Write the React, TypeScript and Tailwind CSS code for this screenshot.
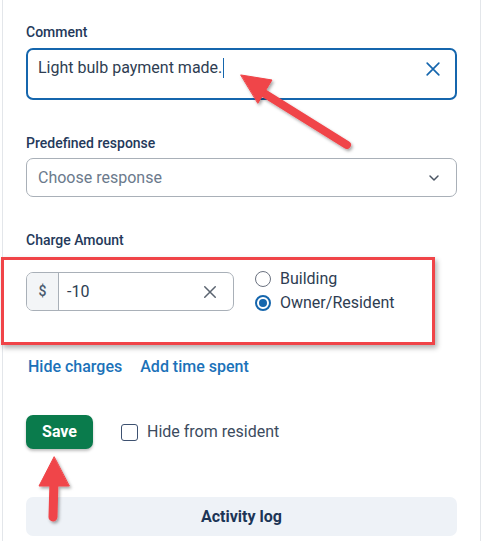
import React from 'react';

const X = ({ className }: { className?: string }) => (
  <svg viewBox="0 0 24 24" className={className} fill="none" stroke="currentColor" strokeWidth={2} strokeLinecap="round">
    <path d="M5 5l14 14M19 5L5 19" />
  </svg>
);

export default function App() {
  return (
    <div className="relative min-h-[541px] bg-white" style={{ fontFamily: 'Roboto, "Liberation Sans", sans-serif' }}>
      <div className="ml-[2px] mr-[2px] min-h-[541px] border-x border-[#e3e6ea] px-[23px] pt-[24px]">
        {/* Comment */}
        <div className="h-[16px] text-[14px] leading-[16px] font-medium text-[#24395a]">Comment</div>
        <div className="mt-[8px] flex h-[52px] items-start rounded-[7px] border-2 border-[#1566ad] pl-[10px] pr-[12px] pt-[7px]">
          <div className="flex flex-1 items-center text-[16px] leading-[22px] text-[#2e3d52]">
            Light bulb payment made.
            <span className="ml-[1px] inline-block h-[20px] w-px bg-[#1566ad]" />
          </div>
          <X className="mt-[2px] h-[20px] w-[20px] text-[#1566ad]" />
        </div>

        {/* Predefined response */}
        <div className="mt-[35px] h-[16px] text-[14px] leading-[16px] font-medium text-[#24395a]">Predefined response</div>
        <div className="mt-[7px] flex h-[39px] items-center rounded-[7px] border border-[#a9b0b8] pl-[11px] pr-[14px]">
          <span className="flex-1 text-[16px] text-[#6b7a8c]">Choose response</span>
          <svg viewBox="0 0 24 24" className="h-[16px] w-[16px] text-[#4a5563]" fill="none" stroke="currentColor" strokeWidth={2.2} strokeLinecap="round" strokeLinejoin="round">
            <path d="M6 9l6 6 6-6" />
          </svg>
        </div>

        {/* Charge Amount */}
        <div className="mt-[35px] h-[16px] text-[14px] leading-[16px] font-medium text-[#24395a]">Charge Amount</div>
        <div className="mt-[24px] flex items-start gap-[21px]">
          <div className="flex h-[39px] w-[208px] overflow-hidden rounded-[7px] border border-[#a9b0b8]">
            <div className="flex w-[32px] items-center justify-center border-r border-[#a9b0b8] bg-[#f3f5f7] text-[14px] font-medium text-[#4a5a6e]">$</div>
            <div className="flex flex-1 items-center pl-[8px] pr-[14px]">
              <span className="flex-1 text-[16px] text-[#2e3d52]">-10</span>
              <X className="h-[18px] w-[18px] text-[#5b6470]" />
            </div>
          </div>
          <div className="-mt-[3px] flex flex-col gap-[4px]">
            <label className="flex items-center gap-[9px] text-[16px] leading-[20px] text-[#2e3d52]">
              <span className="h-[16px] w-[16px] rounded-full border border-[#6b7280]" />
              Building
            </label>
            <label className="flex items-center gap-[9px] text-[16px] leading-[20px] text-[#2e3d52]">
              <span className="flex h-[16px] w-[16px] items-center justify-center rounded-full border-2 border-[#1566ad]">
                <span className="h-[8px] w-[8px] rounded-full bg-[#1566ad]" />
              </span>
              Owner/Resident
            </label>
          </div>
        </div>

        {/* Links */}
        <div className="mt-[44px] flex h-[20px] items-center gap-[18px] pl-[2px] text-[16px] font-medium text-[#1b72b9]">
          <span>Hide charges</span>
          <span>Add time spent</span>
        </div>

        {/* Save */}
        <div className="mt-[38px] flex items-center gap-[28px]">
          <button className="h-[34px] w-[67px] rounded-[7px] bg-[#0a7b4c] text-[16px] font-bold text-white shadow-[0_2px_3px_rgba(0,0,0,0.25)]">Save</button>
          <label className="flex items-center gap-[9px] text-[16px] text-[#3c4b5e]">
            <span className="h-[17px] w-[17px] rounded-[3px] border-[1.5px] border-[#3d5170]" />
            Hide from resident
          </label>
        </div>

        {/* Activity log */}
        <div className="mt-[48px] flex h-[39px] items-center justify-center rounded-[7px] bg-[#eef2f7] text-[16px] font-bold text-[#1c3556]">
          Activity log
        </div>
      </div>

      {/* annotation box */}
      <div className="pointer-events-none absolute left-[1px] top-[257px] h-[88px] w-[434px] border-[3px] border-[#f04448] shadow-[2px_3px_5px_rgba(0,0,0,0.3)]" />

      {/* annotation arrows */}
      <svg className="pointer-events-none absolute left-0 top-0 h-[541px] w-[483px]" viewBox="0 0 483 541">
        <defs>
          <filter id="sh" x="-20%" y="-20%" width="140%" height="140%">
            <feDropShadow dx="1.5" dy="2" stdDeviation="1.5" floodColor="#000" floodOpacity="0.35" />
          </filter>
        </defs>
        <g filter="url(#sh)" fill="#f04448" stroke="#f04448" strokeLinecap="round">
          <line x1="262" y1="92" x2="347" y2="145" strokeWidth={8} />
          <polygon points="241,75 272,80 258,103" strokeWidth={1} strokeLinejoin="round" />
          <line x1="54" y1="480" x2="53" y2="517" strokeWidth={9} />
          <polygon points="54,457 39,486 69,486" strokeWidth={1} strokeLinejoin="round" />
        </g>
      </svg>
    </div>
  );
}
